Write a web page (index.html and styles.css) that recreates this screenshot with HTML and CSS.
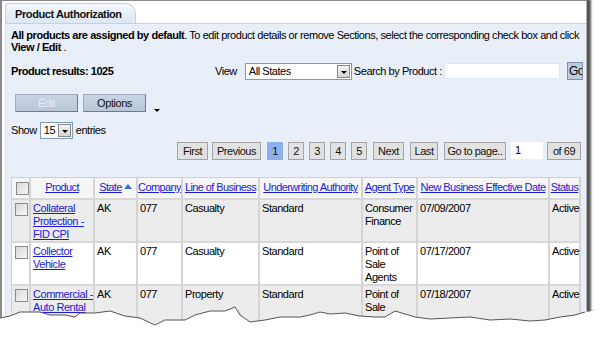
FILE: index.html
```html
<!DOCTYPE html>
<html>
<head>
<meta charset="utf-8">
<link rel="stylesheet" href="styles.css">
</head>
<body>
<div class="page">
<div class="frame">
  <div class="tabs"><div class="tab">Product Authorization</div></div>
  <div class="panel">
    <p class="intro"><b>All products are assigned by default</b>. To edit product details or remove Sections, select the corresponding check box and click <b>View / Edit</b> .</p>
    <div class="row1">
      <div class="results">Product results: 1025</div>
      <div class="filters">
        <span class="lbl">View</span>
        <div class="select wide"><span>All States</span><i class="dd"></i></div>
        <span class="lbl2">Search by Product :</span>
        <div class="input"></div>
        <div class="go">Go</div>
      </div>
    </div>
    <div class="actions">
      <div class="btn disabled">Edit</div>
      <div class="btn">Options</div>
      <span class="caret"></span>
    </div>
    <div class="show">Show <div class="select small"><span>15</span><i class="dd"></i></div> entries</div>
    <div class="pager">
      <span class="pg w-first">First</span><span class="pg w-prev">Previous</span><span class="pg num active">1</span><span class="pg num">2</span><span class="pg num">3</span><span class="pg num">4</span><span class="pg num">5</span><span class="pg w-next">Next</span><span class="pg w-last">Last</span><span class="pg w-goto">Go to page..</span><span class="pginput">1</span><span class="pg w-of">of 69</span>
    </div>
    <table class="grid">
      <thead>
        <tr>
          <th class="cb"><i class="box"></i></th>
          <th class="c-prod"><a>Product</a></th>
          <th class="c-state"><a>State</a><span class="sort"></span></th>
          <th class="c-comp"><a>Company</a></th>
          <th class="c-lob"><a>Line of Business</a></th>
          <th class="c-uw"><a>Underwriting Authority</a></th>
          <th class="c-agent"><a>Agent Type</a></th>
          <th class="c-date"><a>New Business Effective Date</a></th>
          <th class="c-status"><a>Status</a></th>
        </tr>
      </thead>
      <tbody>
        <tr class="odd">
          <td class="cb"><i class="box"></i></td>
          <td><a>Collateral Protection - FID CPI</a></td>
          <td>AK</td><td>077</td><td>Casualty</td><td>Standard</td><td>Consumer Finance</td><td>07/09/2007</td><td>Active</td>
        </tr>
        <tr>
          <td class="cb"><i class="box"></i></td>
          <td><a>Collector Vehicle</a></td>
          <td>AK</td><td>077</td><td>Casualty</td><td>Standard</td><td>Point of Sale Agents</td><td>07/17/2007</td><td>Active</td>
        </tr>
        <tr class="odd">
          <td class="cb"><i class="box"></i></td>
          <td><a>Commercial - Auto Rental</a></td>
          <td>AK</td><td>077</td><td>Property</td><td>Standard</td><td>Point of Sale Agents</td><td>07/18/2007</td><td>Active</td>
        </tr>
      </tbody>
    </table>
  </div>
</div>
<svg class="torn" width="600" height="60" viewBox="0 0 600 60" xmlns="http://www.w3.org/2000/svg">
  <defs>
    <filter id="blur" x="-5%" y="-50%" width="110%" height="200%"><feGaussianBlur stdDeviation="1.4"/></filter>
  </defs>
  <path d="M0,24 L10,20 L20,16 L40,16 L50,19 L65,19 L75,21 L80,17 L95,17 L110,15 L125,20 L140,22 L155,29 L165,24 L185,24 L195,19 L210,15 L225,15 L235,11 L240,19 L250,26 L265,24 L280,21 L300,21 L310,19 L320,16 L330,18 L345,17 L360,20 L375,21 L385,21 L395,15 L405,18 L415,21 L430,23 L450,22 L470,21 L490,24 L510,23 L530,25 L545,24 L560,21 L575,19 L587,14 L592,10 L592,40 L0,40 Z" transform="translate(2,5)" fill="#1e1e1e" filter="url(#blur)"/>
  <path d="M0,22 L10,20 L20,16 L40,16 L50,19 L65,19 L75,21 L80,17 L95,17 L110,15 L125,20 L140,22 L155,29 L165,24 L185,24 L195,19 L210,15 L225,15 L235,11 L240,19 L250,26 L265,24 L280,21 L300,21 L310,19 L320,16 L330,18 L345,17 L360,20 L375,21 L385,21 L395,15 L405,18 L415,21 L430,23 L450,22 L470,21 L490,24 L510,23 L530,25 L545,24 L560,21 L575,19 L585,16 L600,14 L600,60 L0,60 Z" fill="#fff"/>
  <path d="M0,22 L10,20 L20,16 L40,16 L50,19 L65,19 L75,21 L80,17 L95,17 L110,15 L125,20 L140,22 L155,29 L165,24 L185,24 L195,19 L210,15 L225,15 L235,11 L240,19 L250,26 L265,24 L280,21 L300,21 L310,19 L320,16 L330,18 L345,17 L360,20 L375,21 L385,21 L395,15 L405,18 L415,21 L430,23 L450,22 L470,21 L490,24 L510,23 L530,25 L545,24 L560,21 L575,19 L585,16" fill="none" stroke="#555" stroke-width="1"/>
</svg>
</div>
</body>
</html>
```

FILE: styles.css
```css
html, body {
  margin: 0;
  padding: 0;
  background: #fff;
}
body {
  font-family: "Liberation Sans", Arial, sans-serif;
  font-size: 11px;
  letter-spacing: -0.45px;
  color: #000;
  width: 600px;
  height: 350px;
  overflow: hidden;
}
.page {
  position: relative;
  width: 600px;
  height: 350px;
}
.frame {
  width: 581px;
  height: 349px;
  overflow: hidden;
  border-top: 1px solid #8a8a8a;
  border-left: 2px solid #8a8a8a;
  border-right: 1px solid #b0b0b0;
  box-shadow: 3px 0 2px 1px #555;
  background: #fff;
  padding-left: 3px;
}
.tabs {
  height: 22px;
  display: flex;
  align-items: flex-end;
}
.tab {
  height: 19px;
  line-height: 20px;
  padding: 0 13px 0 9px;
  font-weight: bold;
  font-size: 11px;
  letter-spacing: -0.4px;
  color: #111;
  background: linear-gradient(#f4f7fc, #dce6f4);
  border: 1px solid #c3d0e4;
  border-bottom: none;
  border-radius: 3px 10px 0 0;
}
.panel {
  background: #e9eff8;
  border-top: 1px solid #c3d0e4;
  border-left: 1px solid #d6dfee;
  padding: 5px 0 0 5px;
  height: 400px;
}
.intro {
  margin: 0;
  line-height: 12px;
  width: 572px;
}
.row1 {
  display: flex;
  align-items: center;
  margin-top: 9px;
  height: 18px;
  white-space: nowrap;
}
.results {
  font-weight: bold;
  width: 204px;
}
.filters {
  display: flex;
  align-items: center;
}
.lbl { margin-right: 8px; }
.lbl2 { margin: 0 2px 0 2px; }
.select {
  display: flex;
  align-items: center;
  background: #fff;
  border: 1px solid #7f9db9;
  box-sizing: border-box;
}
.select span { padding-left: 3px; flex: 1; line-height: 14px; }
.select.wide { width: 107px; height: 17px; }
.select.small { width: 33px; height: 17px; margin: 0 3px; }
.dd {
  width: 13px;
  height: 13px;
  margin-right: 1px;
  border: 1px solid #888;
  box-sizing: border-box;
  background: linear-gradient(#f4f4f4, #d4d4d4);
  position: relative;
}
.dd::after {
  content: "";
  position: absolute;
  left: 3px;
  top: 5px;
  border-left: 3px solid transparent;
  border-right: 3px solid transparent;
  border-top: 3px solid #000;
}
.input {
  width: 116px;
  height: 16px;
  background: #fff;
  border: 1px solid #e0e6ef;
  box-sizing: border-box;
}
.go {
  margin-left: 7px;
  width: 16px;
  height: 18px;
  line-height: 17px;
  background: #bccbe0;
  border: 1px solid #8090a8;
  font-size: 12px;
  overflow: hidden;
  box-sizing: border-box;
  padding-left: 1px;
}
.actions {
  display: flex;
  align-items: flex-end;
  margin-top: 12px;
  padding-left: 4px;
  height: 20px;
}
.btn {
  width: 63px;
  height: 18px;
  line-height: 16px;
  box-sizing: border-box;
  text-align: center;
  border: 1px solid #a0acbc;
  border-right-color: #6f7c8e;
  border-bottom-color: #6f7c8e;
  background: linear-gradient(#c8d4e3, #b8c6d8);
  margin-right: 5px;
  color: #111;
}
.btn.disabled { color: #e6ecf4; }
.caret {
  align-self: flex-end;
  margin-left: 3px;
  border-left: 3px solid transparent;
  border-right: 3px solid transparent;
  border-top: 3px solid #000;
  width: 0;
  height: 0;
}
.show {
  display: flex;
  align-items: center;
  margin-top: 9px;
  height: 18px;
}
.pager {
  display: flex;
  justify-content: flex-end;
  align-items: center;
  margin-top: 2px;
  padding-right: 5px;
  height: 19px;
}
.pg {
  height: 18px;
  line-height: 16px;
  box-sizing: border-box;
  text-align: center;
  border: 1px solid #a4a4a4;
  background: #e2e2e2;
  margin-left: 5px;
  color: #111;
}
.pg.num { width: 16px; margin-left: 5px; }
.w-first { width: 31px; }
.w-prev { width: 49px; margin-left: 4px; }
.w-prev + .num { margin-left: 6px; }
.w-next { width: 31px; margin-left: 6px; }
.w-last { width: 28px; margin-left: 6px; }
.w-goto { width: 62px; margin-left: 6px; }
.w-of { width: 34px; margin-left: 4px; }
.pg.active { background: #8fb0ec; border-color: #8fb0ec; }
.pginput {
  width: 32px;
  height: 17px;
  line-height: 16px;
  background: #fff;
  margin-left: 5px;
  padding-left: 4px;
  box-sizing: border-box;
}
.grid {
  margin-top: 17px;
  border-collapse: separate;
  border-spacing: 0;
  width: 570px;
  table-layout: fixed;
  background: #fff;
}
.grid th, .grid td {
  box-sizing: border-box;
  border-right: 2px solid #d4d4d4;
  border-bottom: 2px solid #d8d8d8;
  text-align: left;
  vertical-align: top;
  padding: 2px 0 0 2px;
  line-height: 13px;
  font-weight: normal;
}
.grid th {
  background: #f6f6f6;
  border-top: 1px solid #d0d0d0;
  text-align: center;
  padding: 3px 0 3px 0;
  white-space: nowrap;
  overflow: hidden;
  letter-spacing: -0.6px;
}
.grid th:first-child, .grid td:first-child { border-left: 1px solid #d0d0d0; }
.grid a {
  color: #1a1adb;
  text-decoration: underline;
}
.grid tr.odd td { background: #ececec; }
.grid .cb { width: 20px; padding-left: 3px; }
.box {
  display: inline-block;
  width: 11px;
  height: 11px;
  border: 1px solid #8c8c8c;
  background: linear-gradient(135deg, #d8d8d8, #f8f8f8);
  vertical-align: top;
  margin-top: 1px;
}
.c-prod { width: 64px; }
.c-state { width: 43px; }
.c-comp { width: 45px; }
.c-lob { width: 77px; }
.c-uw { width: 103px; }
.c-agent { width: 55px; }
.c-date { width: 132px; }
.c-status { width: 31px; }
.sort {
  display: inline-block;
  margin-left: 2px;
  border-left: 4px solid transparent;
  border-right: 4px solid transparent;
  border-bottom: 5px solid #3a6fc0;
  vertical-align: 2px;
}
.torn {
  position: absolute;
  left: 0;
  top: 296px;
}
```
